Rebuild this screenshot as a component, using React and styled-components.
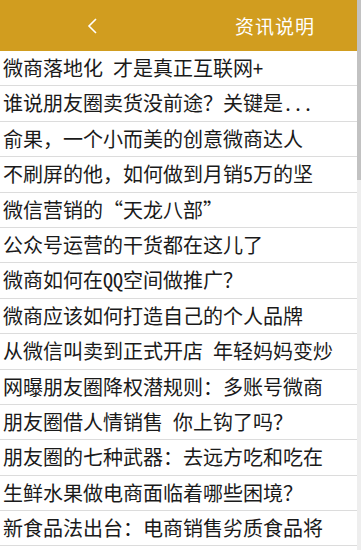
import React from "react";
import styled, { createGlobalStyle } from "styled-components";

const Global = createGlobalStyle`
  html, body { margin: 0; padding: 0; background: #fff; }
  body { font-family: "Noto Sans CJK SC", "Noto Sans", sans-serif; }
`;

const Frame = styled.div`
  display: flex;
  height: 550px;
  overflow: hidden;
`;

const Page = styled.div`
  flex: 1;
  display: flex;
  flex-direction: column;
  min-width: 0;
`;

const ScrollTrack = styled.div`
  width: 4px;
  background: #eeeeee;
  display: flex;
  flex-direction: column;
`;

const ScrollThumb = styled.div`
  height: 180px;
  background: #c2c2c2;
`;

const Header = styled.header`
  height: 51px;
  flex-shrink: 0;
  background: #d19d1f;
  display: flex;
  align-items: center;
  color: #fff;
`;

const Back = styled.div`
  width: 184px;
  display: flex;
  justify-content: center;
  align-items: center;
`;

const Title = styled.h1`
  flex: 1;
  margin: 0;
  padding-right: 42px;
  text-align: right;
  font-size: 19px;
  font-weight: 400;
  letter-spacing: 1px;
`;

const List = styled.ul`
  list-style: none;
  margin: 0;
  padding: 0;
`;

const Row = styled.li`
  box-sizing: border-box;
  height: 35.4px;
  line-height: 34px;
  padding-left: 3px;
  border-bottom: 1.4px solid #dcdcdc;
  font-size: 20px;
  color: #1a1a1a;
  white-space: pre;
  overflow: hidden;
`;

const Half = styled.span`
  font-feature-settings: "hwid" 1;
`;

const items = [
  "微商落地化 才是真正互联网+",
  "谁说朋友圈卖货没前途？关键是...",
  "俞果，一个小而美的创意微商达人",
  "不刷屏的他，如何做到月销5万的坚",
  "微信营销的“天龙八部”",
  "公众号运营的干货都在这儿了",
  "微商如何在QQ空间做推广？",
  "微商应该如何打造自己的个人品牌",
  "从微信叫卖到正式开店 年轻妈妈变炒",
  "网曝朋友圈降权潜规则：多账号微商",
  "朋友圈借人情销售 你上钩了吗？",
  "朋友圈的七种武器：去远方吃和吃在",
  "生鲜水果做电商面临着哪些困境？",
  "新食品法出台：电商销售劣质食品将",
];

function renderText(t) {
  return t.split(/([\x20-\x7e]+)/).filter(Boolean).map((part, i) =>
    /^[\x20-\x7e]+$/.test(part) ? <Half key={i}>{part}</Half> : <React.Fragment key={i}>{part}</React.Fragment>
  );
}

export default function App() {
  return (
    <Frame>
      <Global />
      <Page>
        <Header>
          <Back>
            <svg width="12" height="18" viewBox="0 0 12 18">
              <path d="M10 2 L3 9 L10 16" fill="none" stroke="#fff" strokeWidth="1.6" />
            </svg>
          </Back>
          <Title>资讯说明</Title>
        </Header>
        <List>
          {items.map((t, i) => (
            <Row key={i}>{renderText(t)}</Row>
          ))}
        </List>
      </Page>
      <ScrollTrack>
        <ScrollThumb />
      </ScrollTrack>
    </Frame>
  );
}
